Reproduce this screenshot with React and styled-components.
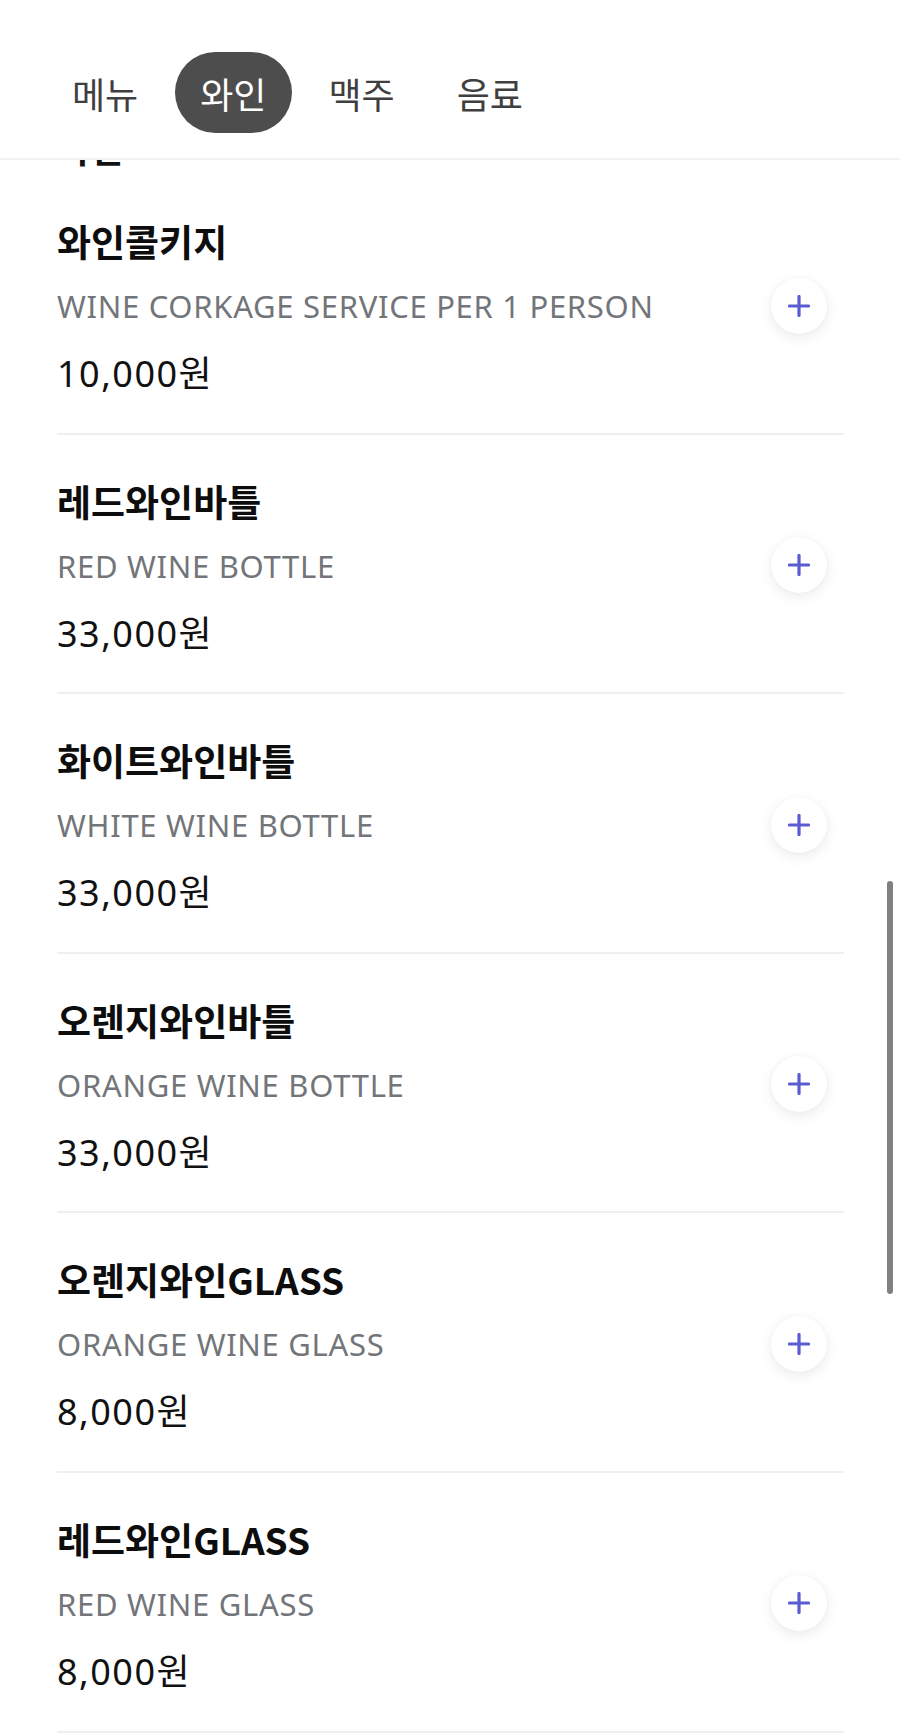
import React from "react";
import styled, { createGlobalStyle } from "styled-components";

const Global = createGlobalStyle`
  html, body { margin: 0; padding: 0; background: #ffffff; }
  body {
    font-family: "Noto Sans", "Noto Sans CJK KR", sans-serif;
    color: #111;
    -webkit-font-smoothing: antialiased;
  }
  * { box-sizing: border-box; }
`;

const Header = styled.header`
  position: fixed;
  top: 0;
  left: 0;
  right: 0;
  height: 160px;
  background: #ffffff;
  border-bottom: 2px solid #f1f1f1;
  z-index: 10;
`;

const Tabs = styled.nav`
  display: flex;
  align-items: center;
  gap: 12px;
  padding: 52px 0 0 47px;
`;

const Tab = styled.button`
  height: 81px;
  padding: 0 25px;
  border: none;
  border-radius: 41px;
  background: ${(p) => (p.$active ? "#4d4d4d" : "transparent")};
  color: ${(p) => (p.$active ? "#ffffff" : "#3f3f3f")};
  font-family: "Noto Sans CJK KR", "Noto Sans", sans-serif;
  font-size: 36px;
  font-weight: 400;
  line-height: 1;
  cursor: pointer;
`;

const Page = styled.main`
  padding: 125px 56px 0 57px;
`;

const SectionTitle = styled.h2`
  margin: 0 0 6px;
  font-family: "Noto Sans CJK KR", "Noto Sans", sans-serif;
  font-size: 36px;
  font-weight: 700;
  line-height: 44px;
  color: #111;
`;

const Item = styled.div`
  display: flex;
  align-items: center;
  padding: 44px 0 36.6px;
  border-bottom: 2px solid #efefef;
`;

const Info = styled.div`
  flex: 1;
  display: flex;
  flex-direction: column;
`;

const Name = styled.div`
  font-family: "Noto Sans CJK KR", "Noto Sans", sans-serif;
  font-size: 37px;
  font-weight: 700;
  line-height: 44px;
  color: #0d0d0d;
`;

const Sub = styled.div`
  margin-top: 23px;
  font-family: "Noto Sans", "Noto Sans CJK KR", sans-serif;
  font-size: 31px;
  font-weight: 400;
  line-height: 40px;
  color: #727579;
  letter-spacing: 0.7px;
`;

const Price = styled.div`
  margin-top: 26px;
  font-family: "Noto Sans", "Noto Sans CJK KR", sans-serif;
  font-size: 36px;
  font-weight: 400;
  line-height: 44px;
  color: #111;
  letter-spacing: 1.5px;
`;

const AddButton = styled.button`
  width: 56px;
  height: 56px;
  margin: -4px 17px 0 0;
  border: none;
  border-radius: 50%;
  background: #ffffff;
  box-shadow: 0 4px 14px rgba(0, 0, 0, 0.08), 0 0 4px rgba(0, 0, 0, 0.03);
  display: flex;
  align-items: center;
  justify-content: center;
  padding: 0;
  cursor: pointer;
`;

const ScrollThumb = styled.div`
  position: fixed;
  right: 7px;
  top: 881px;
  width: 6px;
  height: 413px;
  border-radius: 3px;
  background: #808080;
  z-index: 20;
`;

const PlusIcon = () => (
  <svg width="22" height="22" viewBox="0 0 22 22" aria-hidden="true">
    <path d="M11 1.5v19M1.5 11h19" stroke="#5b5bd2" strokeWidth="3.2" strokeLinecap="round" />
  </svg>
);

const tabs = ["메뉴", "와인", "맥주", "음료"];

const items = [
  { name: "와인콜키지", sub: "WINE CORKAGE SERVICE PER 1 PERSON", price: "10,000원" },
  { name: "레드와인바틀", sub: "RED WINE BOTTLE", price: "33,000원" },
  { name: "화이트와인바틀", sub: "WHITE WINE BOTTLE", price: "33,000원" },
  { name: "오렌지와인바틀", sub: "ORANGE WINE BOTTLE", price: "33,000원" },
  { name: "오렌지와인GLASS", sub: "ORANGE WINE GLASS", price: "8,000원" },
  { name: "레드와인GLASS", sub: "RED WINE GLASS", price: "8,000원" },
];

export default function App() {
  return (
    <>
      <Global />
      <Header>
        <Tabs>
          {tabs.map((t) => (
            <Tab key={t} $active={t === "와인"}>
              {t}
            </Tab>
          ))}
        </Tabs>
      </Header>
      <Page>
        <SectionTitle>와인</SectionTitle>
        {items.map((it) => (
          <Item key={it.name}>
            <Info>
              <Name>{it.name}</Name>
              <Sub>{it.sub}</Sub>
              <Price>{it.price}</Price>
            </Info>
            <AddButton aria-label="추가">
              <PlusIcon />
            </AddButton>
          </Item>
        ))}
      </Page>
      <ScrollThumb />
    </>
  );
}
